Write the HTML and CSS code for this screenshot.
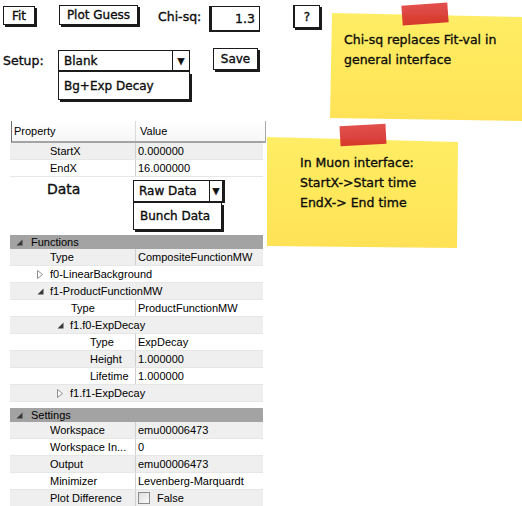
FILE: index.html
```html
<!DOCTYPE html>
<html>
<head>
<meta charset="utf-8">
<link rel="stylesheet" href="styles.css">
</head>
<body>
<div class="page">
  <div class="toolbar sketch">
    <div class="btn btn-fit">Fit</div>
    <div class="btn btn-guess">Plot Guess</div>
    <div class="lbl lbl-chi">Chi-sq:</div>
    <div class="input-chi">1.3</div>
    <div class="btn btn-help">?</div>
  </div>

  <div class="setup sketch">
    <div class="lbl lbl-setup">Setup:</div>
    <div class="combo combo-setup">
      <div class="combo-box"><span class="combo-text">Blank</span><span class="combo-arrow">▼</span></div>
      <div class="combo-list">Bg+Exp Decay</div>
    </div>
    <div class="btn btn-save">Save</div>
  </div>

  <div class="props">
    <div class="props-head">
      <div class="ph-name">Property</div>
      <div class="ph-val">Value</div>
    </div>
    <div class="row alt"><div class="name l1">StartX</div><div class="val">0.000000</div></div>
    <div class="row"><div class="name l1">EndX</div><div class="val">16.000000</div></div>

    <div class="data-row sketch">
      <div class="data-label">Data</div>
      <div class="combo combo-data">
        <div class="combo-box"><span class="combo-text">Raw Data</span><span class="combo-arrow">▼</span></div>
        <div class="combo-list">Bunch Data</div>
      </div>
    </div>

    <div class="band">
      <svg class="tri-open" width="7" height="7" viewBox="0 0 7 7"><path d="M6.5 0.5V6.5H0.5Z" fill="#3a3a3a"/></svg>
      <span>Functions</span>
    </div>
    <div class="row alt"><div class="name l1">Type</div><div class="val">CompositeFunctionMW</div></div>
    <div class="row group g1">
      <svg class="tri-closed" width="6" height="9" viewBox="0 0 6 9"><path d="M0.5 0.5L5.5 4.5L0.5 8.5Z" fill="#fff" stroke="#8e8e8e"/></svg>
      <span>f0-LinearBackground</span>
    </div>
    <div class="row alt group g1">
      <svg class="tri-open" width="7" height="7" viewBox="0 0 7 7"><path d="M6.5 0.5V6.5H0.5Z" fill="#3a3a3a"/></svg>
      <span>f1-ProductFunctionMW</span>
    </div>
    <div class="row"><div class="name l2">Type</div><div class="val">ProductFunctionMW</div></div>
    <div class="row alt group g2">
      <svg class="tri-open" width="7" height="7" viewBox="0 0 7 7"><path d="M6.5 0.5V6.5H0.5Z" fill="#3a3a3a"/></svg>
      <span>f1.f0-ExpDecay</span>
    </div>
    <div class="row"><div class="name l3">Type</div><div class="val">ExpDecay</div></div>
    <div class="row alt"><div class="name l3">Height</div><div class="val">1.000000</div></div>
    <div class="row"><div class="name l3">Lifetime</div><div class="val">1.000000</div></div>
    <div class="row alt group g2">
      <svg class="tri-closed" width="6" height="9" viewBox="0 0 6 9"><path d="M0.5 0.5L5.5 4.5L0.5 8.5Z" fill="#fff" stroke="#8e8e8e"/></svg>
      <span>f1.f1-ExpDecay</span>
    </div>

    <div class="band band-settings">
      <svg class="tri-open" width="7" height="7" viewBox="0 0 7 7"><path d="M6.5 0.5V6.5H0.5Z" fill="#3a3a3a"/></svg>
      <span>Settings</span>
    </div>
    <div class="row alt"><div class="name l1">Workspace</div><div class="val">emu00006473</div></div>
    <div class="row"><div class="name l1">Workspace In...</div><div class="val">0</div></div>
    <div class="row alt"><div class="name l1">Output</div><div class="val">emu00006473</div></div>
    <div class="row"><div class="name l1">Minimizer</div><div class="val">Levenberg-Marquardt</div></div>
    <div class="row alt"><div class="name l1">Plot Difference</div><div class="val"><span class="check"></span><span>False</span></div></div>
  </div>

  <div class="sticky sticky-1 sketch">
    <p>Chi-sq replaces Fit-val in<br>general interface</p>
  </div>
  <div class="tape tape-1"></div>

  <div class="sticky sticky-2 sketch">
    <p>In Muon interface:<br>StartX-&gt;Start time<br>EndX-&gt; End time</p>
  </div>
  <div class="tape tape-2"></div>
</div>
</body>
</html>
```

FILE: styles.css
```css
* { box-sizing: border-box; }
html, body { margin: 0; padding: 0; background: #fff; }

.page {
  position: relative;
  width: 522px;
  height: 506px;
  overflow: hidden;
  font-family: "DejaVu Sans", sans-serif;
  color: #111;
}

/* hand-drawn look: slightly heavier strokes */
.sketch {
  font-family: "DejaVu Sans", sans-serif;
  color: #0d0d0d;
  -webkit-text-stroke: 0.35px #0d0d0d;
}

/* ---------- sketch widgets ---------- */
.toolbar {
  display: flex;
  align-items: flex-start;
  padding-top: 5px;
  height: 48px;
}
.btn {
  display: flex;
  align-items: center;
  justify-content: center;
  border: 1px solid #1b1b1b;
  box-shadow: 2px 2px 0 #1b1b1b;
  background: #fff;
  font-size: 12px;
}
.btn-fit { margin-left: 3px; margin-top: 1px; width: 32px; height: 19px; }
.btn-guess { margin-left: 24px; width: 79px; height: 20px; }
.lbl { font-size: 12.5px; }
.lbl-chi { margin-left: 20px; margin-top: 4px; width: 51px; }
.input-chi {
  margin-top: 1px;
  width: 51px;
  height: 26px;
  border: 1px solid #1b1b1b;
  border-left-width: 3px;
  border-bottom-width: 2px;
  display: flex;
  align-items: center;
  justify-content: flex-end;
  padding-right: 4px;
  font-size: 12.5px;
}
.btn-help { margin-left: 33px; width: 27px; height: 23px; border-left-width: 2px; }

.setup {
  display: flex;
  align-items: flex-start;
  height: 73px;
}
.lbl-setup { margin-left: 3px; margin-top: 5px; width: 55px; }
.combo { display: flex; flex-direction: column; }
.combo-setup { margin-top: 2px; width: 132px; }
.combo-box {
  display: flex;
  align-items: stretch;
  height: 22px;
  border: 1px solid #1b1b1b;
  border-bottom-width: 2px;
  background: #fff;
  font-size: 12px;
}
.combo-text { flex: 1; display: flex; align-items: center; padding-left: 5px; }
.combo-arrow {
  width: 17px;
  border-left: 1px solid #1b1b1b;
  display: flex;
  align-items: center;
  justify-content: center;
  font-size: 9px;
}
.combo-list {
  height: 28px;
  border: 1px solid #1b1b1b;
  border-top: none;
  box-shadow: 2px 2px 0 #1b1b1b;
  display: flex;
  align-items: center;
  padding-left: 5px;
  font-size: 12px;
  background: #fff;
}
.btn-save { margin-left: 23px; width: 45px; height: 22px; }

/* ---------- property browser ---------- */
.props {
  margin-left: 10px;
  width: 253px;
  font-family: "Liberation Sans", Arial, sans-serif;
  font-size: 11px;
  color: #000;
}
.props-head {
  display: flex;
  margin-left: 1px;
  width: 255px;
  height: 22px;
  border-left: 1px solid #707070;
  border-right: 1px solid #a8a8a8;
  border-bottom: 2px solid #a4a4a4;
  background: linear-gradient(#ffffff, #f6f6f6);
}
.ph-name {
  width: 124px;
  border-right: 1px solid #dadada;
  padding-left: 2px;
  display: flex;
  align-items: center;
}
.ph-val { padding-left: 4px; display: flex; align-items: center; }

.row {
  display: flex;
  height: 17px;
  border-bottom: 1px solid #e6e6e6;
  background: #fff;
}
.row.alt { background: #efefef; }
.name {
  width: 126px;
  border-right: 1px solid #cfcfcf;
  display: flex;
  align-items: center;
  white-space: nowrap;
}
.name.l1 { padding-left: 40px; }
.name.l2 { padding-left: 61px; }
.name.l3 { padding-left: 80px; }
.val {
  flex: 1;
  padding-left: 2px;
  display: flex;
  align-items: center;
  gap: 7px;
  white-space: nowrap;
}
.group { align-items: center; gap: 6px; }
.group.g1 { padding-left: 27px; }
.group.g2 { padding-left: 47px; }
.tri-open, .tri-closed { flex: none; }
.tri-closed { margin-right: 1px; }

.check {
  width: 12px;
  height: 12px;
  border: 1px solid #8c8c8c;
  background: linear-gradient(135deg, #dcdcdc, #fbfbfb);
}

.data-row {
  display: flex;
  align-items: flex-start;
  height: 58px;
}
.data-label {
  width: 123px;
  padding-left: 37px;
  margin-top: 4px;
  font-size: 14px;
}
.combo-data { margin-top: 3px; width: 90px; }
.combo-data .combo-box { height: 23px; box-shadow: 2px 0 0 #1b1b1b; }
.combo-data .combo-arrow { width: 13px; }
.combo-data .combo-list { width: 89px; height: 27px; padding-left: 6px; }
.combo-data .combo-text { padding-left: 5px; }

.band {
  display: flex;
  align-items: center;
  gap: 8px;
  height: 14px;
  padding-left: 6px;
  background: #a3a3a3;
  color: #000;
}
.band-settings { margin-top: 6px; }

/* ---------- sticky notes ---------- */
.sticky {
  position: absolute;
  font-size: 12.5px;
  line-height: 20px;
  background: linear-gradient(180deg, #ffed66 0%, #ffe95c 45%, #ffe65a 68%, #ffe156 100%);
}
.sticky p { margin: 0; }
.sticky-1 {
  left: 330px;
  top: 13px;
  width: 192px;
  height: 108px;
  padding: 17px 0 0 14px;
  clip-path: polygon(2px 0, 192px 4px, 192px 108px, 0 105px);
}
.sticky-2 {
  left: 267px;
  top: 137px;
  width: 191px;
  height: 111px;
  padding: 16px 0 0 33px;
  clip-path: polygon(0 0, 191px 5px, 190px 111px, 0 109px);
}
.tape {
  position: absolute;
  width: 46px;
  height: 20px;
  background: linear-gradient(180deg, #e0403a, #d22a28);
  opacity: 0.92;
}
.tape-1 { left: 402px; top: 4px; transform: rotate(-4deg); }
.tape-2 { left: 340px; top: 125px; transform: rotate(-3deg); }
```
